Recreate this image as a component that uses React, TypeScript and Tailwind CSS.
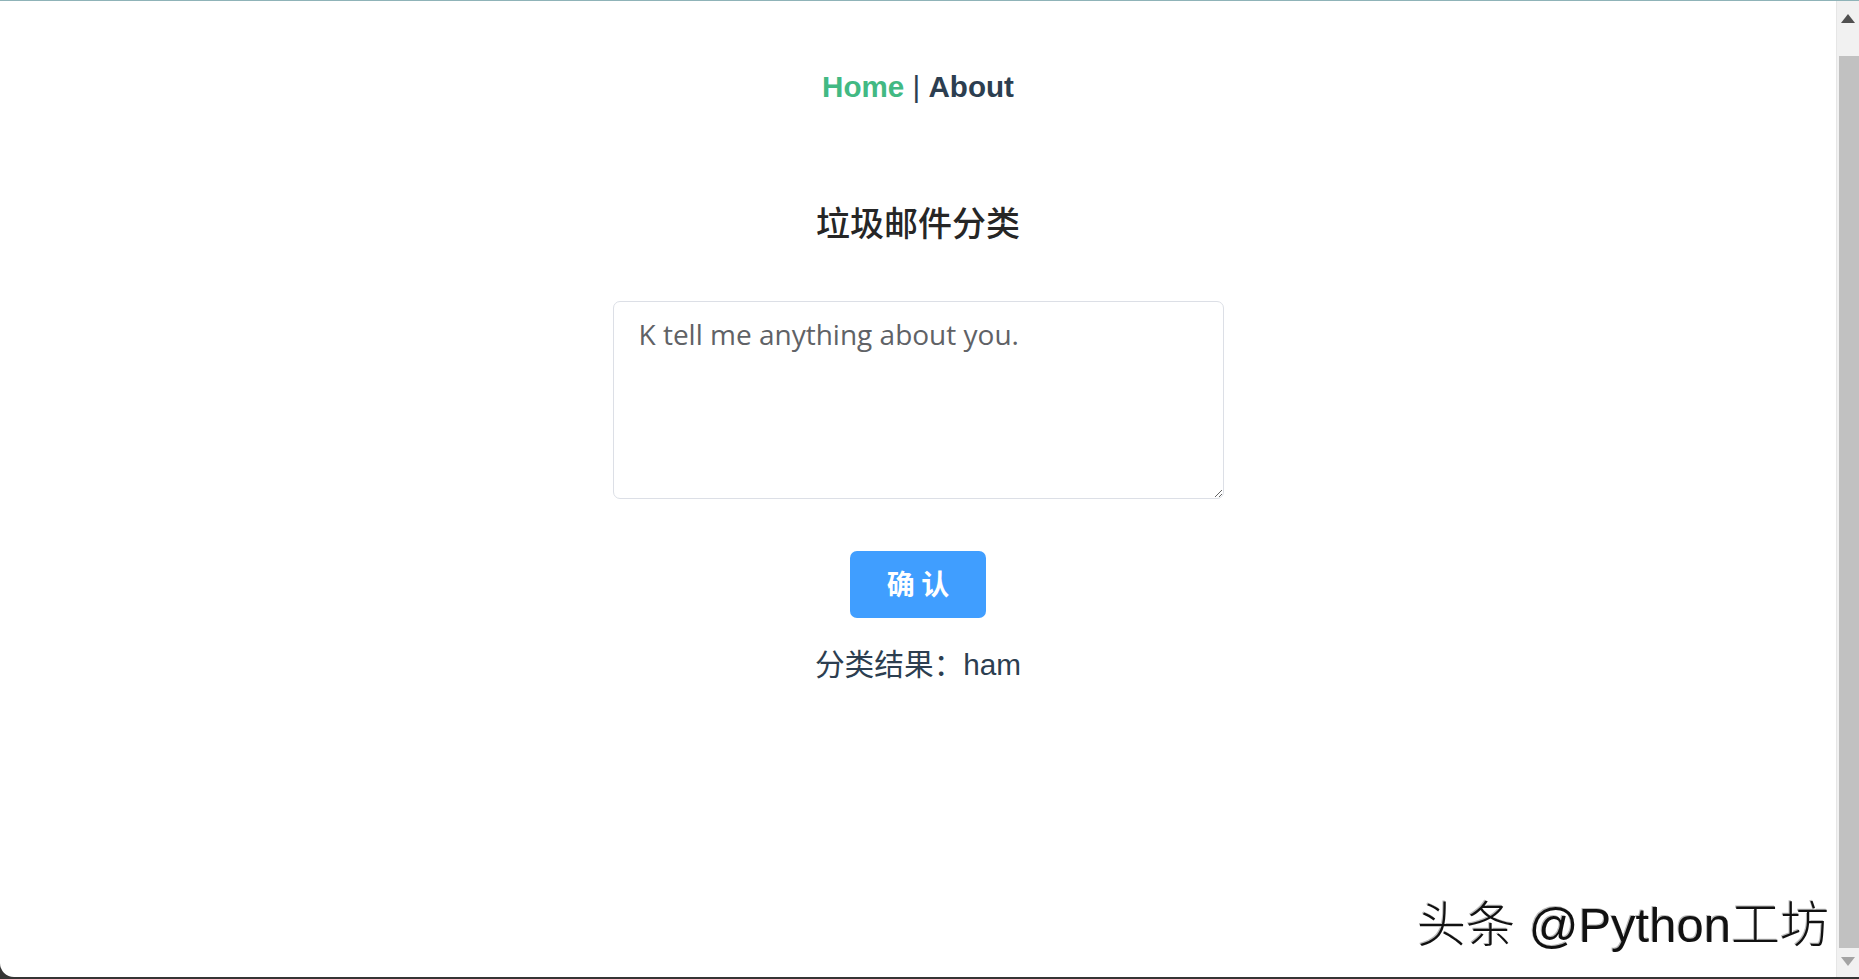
import React, { useState } from 'react';

const latin = '"Liberation Sans", Arial, "Noto Sans CJK SC", sans-serif';

function Scrollbar() {
  return (
    <div className="flex w-[23px] flex-col border-l border-[#e6e6e6] bg-[#f1f1f1]">
      <div className="flex h-[55px] items-start justify-center pt-[13px]">
        <svg width="14" height="9" viewBox="0 0 14 9">
          <path d="M7 0 L14 9 L0 9 Z" fill="#505050" />
        </svg>
      </div>
      <div className="ml-[2px] flex-1 bg-[#c1c1c1]" />
      <div className="flex h-[29px] items-start justify-center pt-[9px]">
        <svg width="14" height="9" viewBox="0 0 14 9">
          <path d="M0 0 L14 0 L7 9 Z" fill="#a3a3a3" />
        </svg>
      </div>
    </div>
  );
}

export default function App() {
  const [text, setText] = useState('K tell me anything about you.');

  return (
    <div className="flex h-[979px] w-full flex-col overflow-hidden bg-[#353535]">
      <div className="h-px bg-[#8fb3b8]" />
      <div className="relative flex flex-1 overflow-hidden rounded-bl-[14px] bg-white">
        <main className="flex flex-1 flex-col items-center">
          <nav
            className="pt-[69px] text-[29.6px] leading-[33px] text-[#2c3e50]"
            style={{ fontFamily: latin }}
          >
            <a className="font-bold text-[#42b983]">Home</a> | <a className="font-bold">About</a>
          </nav>

          <h3
            className="mt-[99px] text-[34px] font-medium leading-[40px] text-[#262626]"
            style={{ fontFamily: '"Noto Sans CJK SC", sans-serif' }}
          >
            垃圾邮件分类
          </h3>

          <textarea
            value={text}
            onChange={(e) => setText(e.target.value)}
            className="mt-[59px] h-[198px] w-[611px] rounded-[7px] border border-[#dcdfe6] px-[25px] py-[11px] text-[28px] leading-[1.5] text-[#606266] outline-none"
            style={{ fontFamily: '"Open Sans", "Noto Sans CJK SC", sans-serif' }}
          />

          <button
            className="mt-[52px] h-[67px] w-[136px] rounded-[7px] bg-[#409eff] pb-[3px] text-[28px] font-bold text-white"
            style={{ fontFamily: '"Noto Sans CJK SC", sans-serif' }}
          >
            确 认
          </button>

          <p
            className="mt-[30px] text-[29.7px] leading-[34px] text-[#2c3e50]"
            style={{ fontFamily: latin }}
          >
            分类结果：ham
          </p>
        </main>

        <Scrollbar />

        <div
          className="absolute bottom-[27px] right-[30px] text-[49px] font-light leading-none text-[#111] [text-shadow:1px_1px_0_#fff,-1px_-1px_0_#bbb]"
          style={{ fontFamily: '"Liberation Sans", "Noto Sans CJK SC", sans-serif' }}
        >
          头条 @Python工坊
        </div>
      </div>
      <div className="h-[2px]" />
    </div>
  );
}
